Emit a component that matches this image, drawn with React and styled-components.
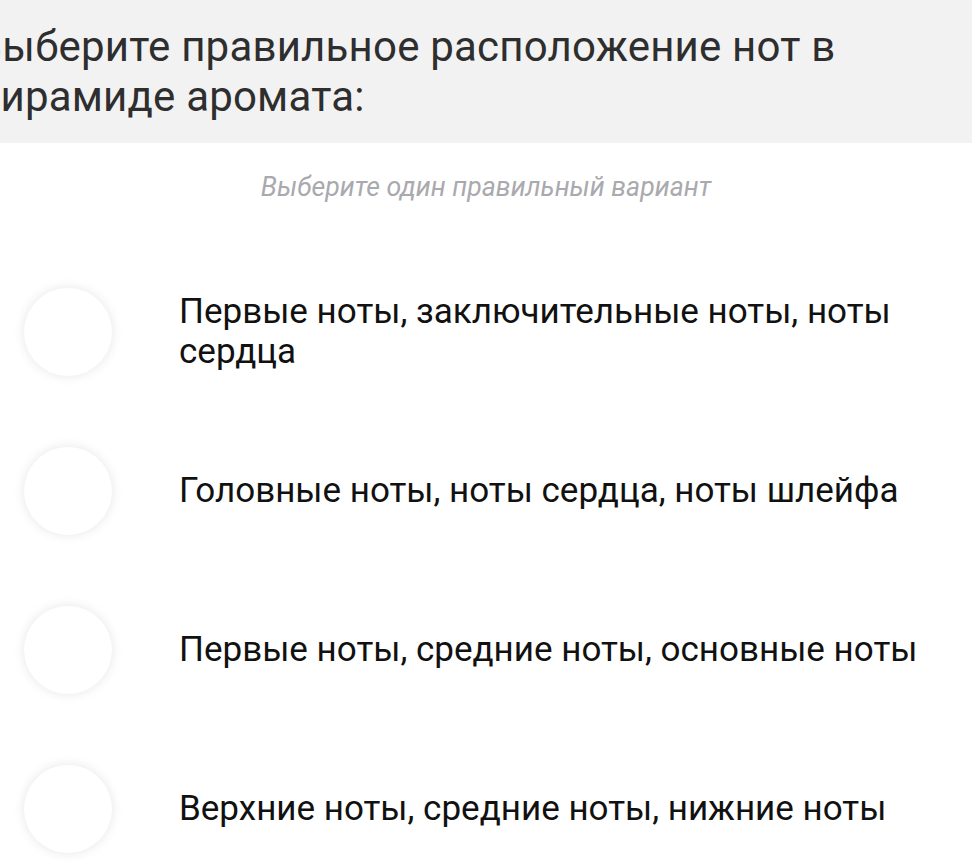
import styled, { createGlobalStyle } from "styled-components";

const GlobalStyle = createGlobalStyle`
  body {
    margin: 0;
    background: #ffffff;
    font-family: Roboto, "Noto Sans", sans-serif;
  }
`;

const Page = styled.div`
  width: 972px;
  height: 864px;
  overflow: hidden;
  background: #ffffff;
`;

const Header = styled.div`
  background: #f2f2f2;
  height: 143px;
  box-sizing: border-box;
  padding-top: 22px;
  overflow: hidden;
`;

const Title = styled.h1`
  margin: 0 0 0 -24px;
  width: 900px;
  font-size: 42px;
  letter-spacing: 0.2px;
  font-weight: 400;
  line-height: 50px;
  color: #2e2e2e;
`;

const Hint = styled.p`
  margin: 29px 0 0;
  text-align: center;
  font-size: 26.7px;
  line-height: 30px;
  font-style: italic;
  color: #a9a9ae;
`;

const Options = styled.div`
  display: flex;
  flex-direction: column;
  margin-top: 50px;
`;

const Option = styled.label`
  display: flex;
  align-items: center;
  height: 159px;
  cursor: pointer;
`;

const Radio = styled.span`
  flex: none;
  width: 88px;
  height: 88px;
  margin-left: 24px;
  border-radius: 50%;
  background: #ffffff;
  box-shadow: 0 0 12px rgba(0, 0, 0, 0.1);
`;

const Label = styled.span`
  margin-left: 67px;
  max-width: 740px;
  font-size: 35px;
  line-height: 40px;
  color: #111111;
`;

const answers = [
  "Первые ноты, заключительные ноты, ноты сердца",
  "Головные ноты, ноты сердца, ноты шлейфа",
  "Первые ноты, средние ноты, основные ноты",
  "Верхние ноты, средние ноты, нижние ноты",
];

const App = () => {
  return (
    <Page>
      <GlobalStyle />
      <Header>
        <Title>Выберите правильное расположение нот в пирамиде аромата:</Title>
      </Header>
      <Hint>Выберите один правильный вариант</Hint>
      <Options>
        {answers.map((text) => (
          <Option key={text}>
            <Radio />
            <Label>{text}</Label>
          </Option>
        ))}
      </Options>
    </Page>
  );
};

export default App;
